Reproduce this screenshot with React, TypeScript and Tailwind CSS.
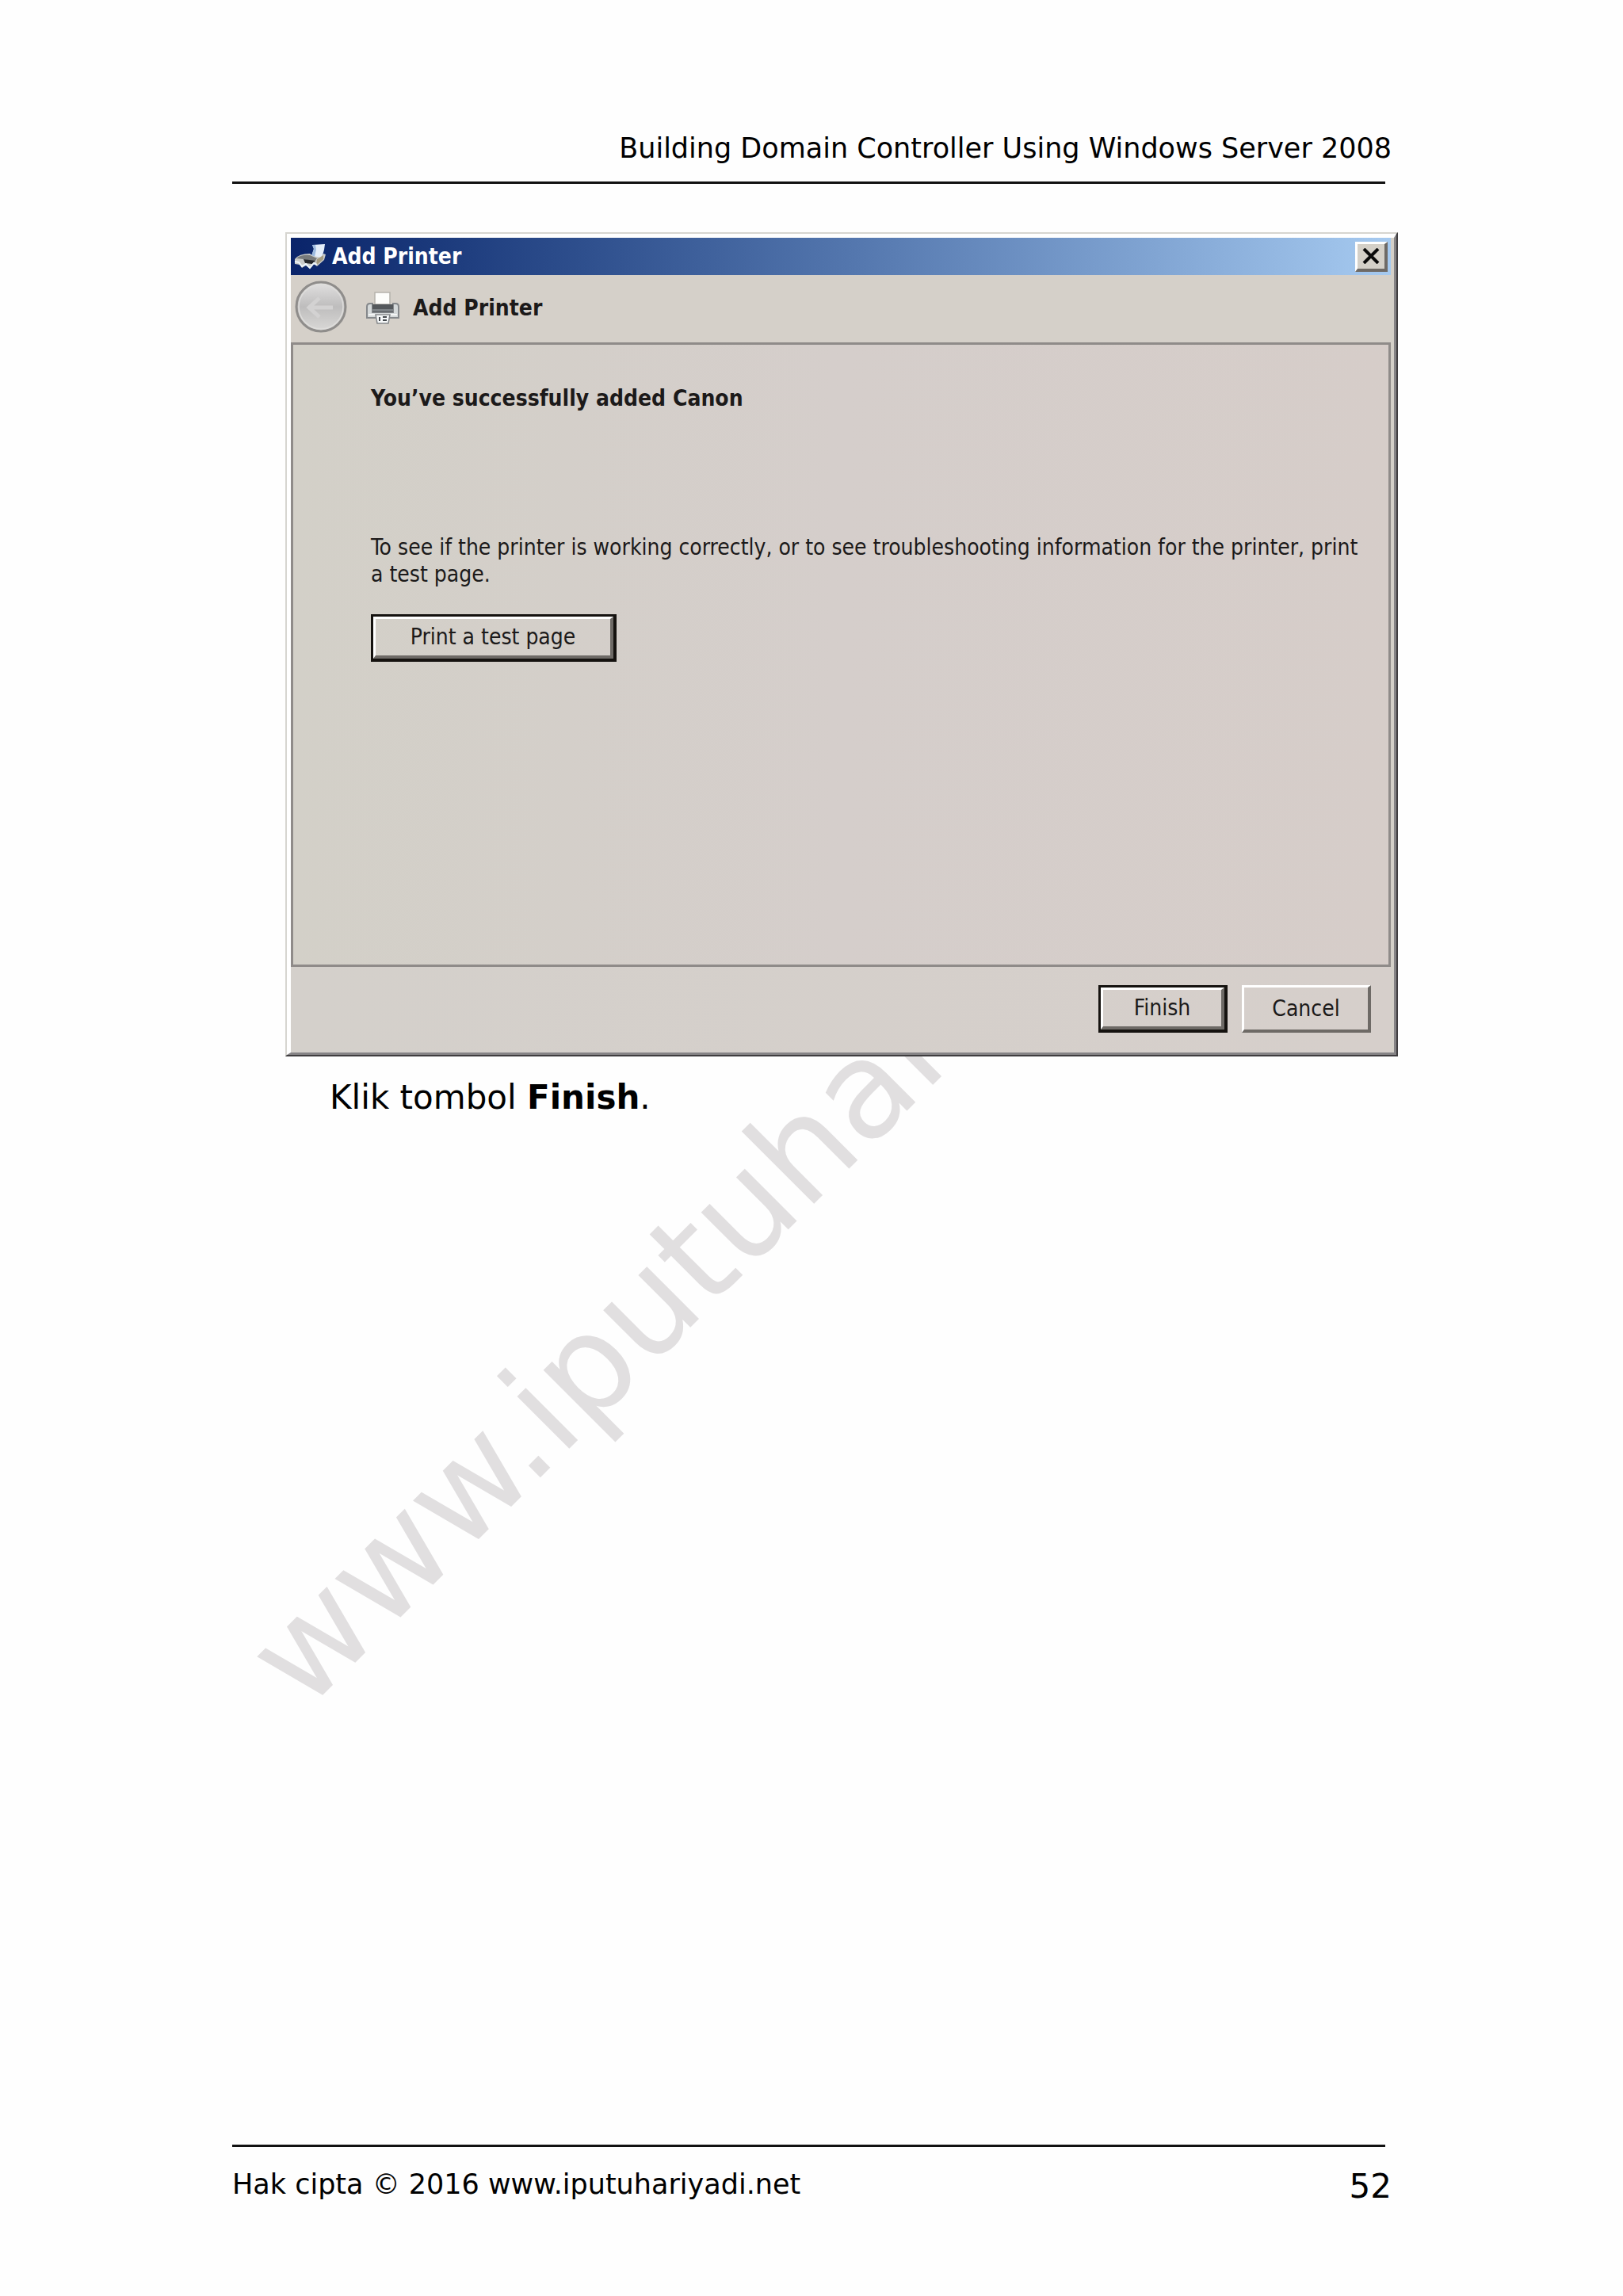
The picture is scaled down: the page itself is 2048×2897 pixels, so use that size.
import React from "react";

const raised =
  "border-t-[3px] border-l-[3px] border-r-4 border-b-4 border-t-white border-l-white border-r-[#6e6a66] border-b-[#6e6a66]";

function DeviceIcon() {
  return (
    <svg viewBox="0 0 42 34" className="h-[34px] w-[42px]" aria-hidden="true">
      <path d="M22 16 L25 7 L23 2 L39 1 L38 8 L35 19 Z" fill="#e4eefa" />
      <path d="M22 16 L25 7 L23 2 L27 2 L28 8 L26 17 Z" fill="#9dbbe0" />
      <path d="M1 20 Q6 13 20 13 L24 16 L34 18 L37 13 L40 14 L38 21 L29 29 L25 26 L20 32 L15 28 L10 31 L7 27 L1 26 Z" fill="#c9cbc9" />
      <path d="M3 19 Q9 14 20 15 L29 19 L26 23 L12 20 Z" fill="#777a7b" />
      <path d="M12 20 L27 22 L23 26 L14 25 Z" fill="#26282b" />
      <path d="M29 20 L37 15 L37 20 L28 28 Z" fill="#a59c80" />
      <path d="M1 23 L6 24 L10 29 L15 26 L20 31 L25 25 L29 27" fill="none" stroke="#eef6fb" strokeWidth="2" />
    </svg>
  );
}

function PrinterIcon() {
  return (
    <svg viewBox="0 0 44 42" className="h-[42px] w-[44px]" aria-hidden="true">
      <rect x="12" y="1" width="19" height="15" fill="#fdfdfb" stroke="#b5b2ac" strokeWidth="1.5" />
      <path d="M2 19 Q2 15 6 15 H9 V26 H35 V15 H38 Q42 15 42 19 V33 H2 Z" fill="#d5d9da" stroke="#85888b" strokeWidth="2" />
      <rect x="9" y="16" width="26" height="10" fill="#54585c" />
      <rect x="9" y="22" width="26" height="3" fill="#7d8286" />
      <path d="M4 29 H40" stroke="#f4f5f5" strokeWidth="2" />
      <path d="M13 29 H31 L29 40 H15 Z" fill="#f7f9fa" stroke="#85888b" strokeWidth="1.5" />
      <path d="M18 32 V37 M22 32 H27 M22 36 H27" fill="none" stroke="#45494d" strokeWidth="2" />
    </svg>
  );
}

function BackIcon() {
  return (
    <svg viewBox="0 0 68 68" className="h-[68px] w-[68px]" aria-hidden="true">
      <defs>
        <linearGradient id="back-face" x1="0" y1="0" x2="0" y2="1">
          <stop offset="0" stopColor="#e2e1e1" />
          <stop offset="0.5" stopColor="#bebdbd" />
          <stop offset="1" stopColor="#dad9d7" />
        </linearGradient>
      </defs>
      <circle cx="34" cy="34" r="31" fill="url(#back-face)" stroke="#8f8d8b" strokeWidth="3" />
      <circle cx="34" cy="34" r="28" fill="none" stroke="#dedddb" strokeWidth="1.5" />
      <path d="M49 35 H20 M32 23 L19 35 L32 47" fill="none" stroke="#d3d2d2" strokeWidth="5" />
    </svg>
  );
}

function CloseIcon() {
  return (
    <svg viewBox="0 0 22 20" className="h-5 w-[22px]" aria-hidden="true">
      <path d="M2 1 L20 19 M20 1 L2 19" stroke="#0b0b0b" strokeWidth="4" />
    </svg>
  );
}

function AddPrinterDialog() {
  return (
    <section
      aria-labelledby="dialog-title"
      className="relative border-2 border-t-[#d6d5d0] border-l-[#d6d5d0] border-r-[#3f3d3f] border-b-[#3f3d3f] bg-[#d4d0c8] font-['DejaVu_Sans_Condensed','DejaVu_Sans',sans-serif] text-[28px] leading-[34px] text-[#1c1a1a]"
    >
      <div className="border-t-[5px] border-l-[5px] border-r-[3px] border-b-[3px] border-t-white border-l-white border-r-[#858385] border-b-[#858385] pr-1">
        <div className="flex h-[47px] items-center bg-linear-to-r from-[#0a246a] to-[#a6caf0] pr-1 pl-1">
          <DeviceIcon />
          <h1 id="dialog-title" className="pl-1.5 font-bold text-white">
            Add Printer
          </h1>
          <button
            type="button"
            aria-label="Close"
            className={`ml-auto flex h-[38px] w-[41px] items-center justify-center bg-[#d4d0c8] ${raised}`}
          >
            <CloseIcon />
          </button>
        </div>

        <div className="flex h-[85px] items-start bg-[#d5d0c9] pt-1.5 pl-1">
          <button type="button" aria-label="Back" disabled>
            <BackIcon />
          </button>
          <div className="flex items-center pt-[15px] pl-[22px]">
            <PrinterIcon />
            <h2 className="pl-4 font-bold">Add Printer</h2>
          </div>
        </div>

        <div className="h-[788px] border-[3px] border-[#8f8b89] bg-linear-to-r from-[#d3d0c8] via-[#d5cecb] to-[#d6cdc9] pt-[51px] pr-8 pl-[98px]">
          <h3 className="font-bold">You’ve successfully added Canon</h3>
          <p className="pt-[154px]">
            To see if the printer is working correctly, or to see troubleshooting information for the printer, print
            a test page.
          </p>
          <button type="button" className="mt-[33px] border-[3px] border-r-4 border-b-4 border-[#15120f]">
            <span className={`block h-[53px] w-[303px] leading-[46px] ${raised}`}>Print a test page</span>
          </button>
        </div>

        <div className="flex h-[108px] justify-end gap-[18px] bg-linear-to-r from-[#d4d0cb] to-[#d6cfcb] pt-[23px] pr-[25px]">
          <button type="button" className="h-[60px] border-[3px] border-r-4 border-b-4 border-[#15120f]">
            <span className={`block h-[53px] w-[156px] leading-[46px] ${raised}`}>Finish</span>
          </button>
          <button type="button" className={`h-[60px] w-[163px] ${raised}`}>
            Cancel
          </button>
        </div>
      </div>
    </section>
  );
}

export default function App() {
  return (
    <div className="relative flex min-h-screen flex-col overflow-hidden bg-[#fefefe] pt-[165px] pr-[284px] pb-[113px] pl-[293px] font-['DejaVu_Sans',sans-serif] text-[42px] leading-[50px] text-black">
      <div
        aria-hidden="true"
        className="absolute top-[2017px] left-[385px] origin-[0px_144px] -rotate-45 text-[170px] leading-[170px] whitespace-nowrap text-[#e1dfe0]"
      >
        www.iputuhariyadi.net
      </div>

      <header className="relative">
        <p className="pr-2 text-right text-[35px] leading-[44px]">Building Domain Controller Using Windows Server 2008</p>
        <hr className="mt-5 mr-4 border-t-[3px] border-[#111]" />
      </header>

      <main className="pt-[61px] pl-[67px]">
        <AddPrinterDialog />
        <p className="relative pt-[27px] pl-14">
          Klik tombol <strong>Finish</strong>.
        </p>
      </main>

      <footer className="relative mt-auto">
        <hr className="mr-4 border-t-[3px] border-[#111]" />
        <div className="flex items-start justify-between pt-[25px] pr-2">
          <p className="text-[35px] leading-[44px]">Hak cipta © 2016 www.iputuhariyadi.net</p>
          <span>52</span>
        </div>
      </footer>
    </div>
  );
}
